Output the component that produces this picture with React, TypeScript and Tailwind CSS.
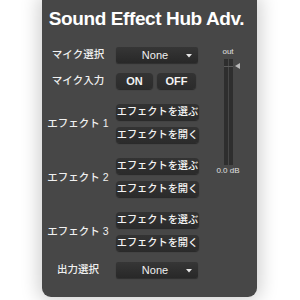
import React from 'react';

const jp = { fontFamily: '"Liberation Sans", "Noto Sans CJK JP", sans-serif' };

function Arrow() {
  return (
    <svg width="6" height="4" viewBox="0 0 6 4" className="absolute right-[6px] top-[7px]">
      <path d="M0 0 L6 0 L3 3.5 Z" fill="#e6e6e6" />
    </svg>
  );
}

function SelectBox({ value }: { value: string }) {
  return (
    <div className="relative w-[82px] h-[16px] rounded-[2px] bg-gradient-to-b from-[#363636] to-[#282828] shadow-[0_1px_1px_rgba(0,0,0,0.35)] flex items-center justify-center text-[11px] text-[#f0f0f0] pr-[4px]">
      <span>{value}</span>
      <Arrow />
    </div>
  );
}

function Btn({ label, w, bold }: { label: string; w: string; bold?: boolean }) {
  return (
    <div
      className={`${w} h-[16px] rounded-[4px] bg-gradient-to-b from-[#333333] to-[#2b2b2b] shadow-[0_1px_1px_rgba(0,0,0,0.45)] flex items-center justify-center text-[#f4f4f4] whitespace-nowrap ${
        bold ? 'text-[11px] font-bold' : 'text-[10.2px] font-medium'
      }`}
    >
      {label}
    </div>
  );
}

function Row({ label, children, className }: { label: string; children: React.ReactNode; className?: string }) {
  return (
    <div className={`flex items-center ${className ?? ''}`}>
      <div className="w-[72px] text-center text-[10.5px] font-medium text-[#f0f0f0] whitespace-nowrap">{label}</div>
      <div className="ml-[2px] flex flex-col gap-[7px]">{children}</div>
    </div>
  );
}

function EffectRow({ n, className }: { n: number; className?: string }) {
  return (
    <Row label={`エフェクト ${n}`} className={className}>
      <Btn label="エフェクトを選ぶ" w="w-[83px]" />
      <Btn label="エフェクトを開く" w="w-[83px]" />
    </Row>
  );
}

export default function App() {
  return (
    <div className="w-[300px] h-[300px] bg-white overflow-hidden" style={jp}>
      <div className="ml-[42px] w-[215px] h-[297px] bg-[#474747] rounded-b-[9px] shadow-[0_0_18px_4px_rgba(0,0,0,0.18)]">
        <div className="pt-[9px] pr-[6px] h-[28px] text-center text-[19px] leading-[19px] font-bold text-white tracking-[-0.4px] whitespace-nowrap">
          Sound Effect Hub Adv.
        </div>

        <div className="mt-[19px] flex items-start">
          <div className="w-[158px] flex flex-col">
            <Row label="マイク選択">
              <SelectBox value="None" />
            </Row>
            <Row label="マイク入力" className="mt-[10px]">
              <div className="flex gap-[4px]">
                <Btn label="ON" w="w-[37px]" bold />
                <Btn label="OFF" w="w-[39px]" bold />
              </div>
            </Row>
            <EffectRow n={1} className="mt-[15px]" />
            <EffectRow n={2} className="mt-[15px]" />
            <EffectRow n={3} className="mt-[15px]" />
            <Row label="出力選択" className="mt-[11px]">
              <SelectBox value="None" />
            </Row>
          </div>

          <div className="ml-[16px] w-[24px] flex flex-col items-center">
            <div className="text-[8px] leading-[10px] text-[#e0e0e0]">out</div>
            <div className="relative mt-[2px] h-[106px] w-[9px] flex gap-[1px]">
              <div className="w-[4px] h-full bg-[#2e2e2e]" />
              <div className="w-[4px] h-full bg-[#2e2e2e]" />
              <div className="absolute left-0 top-[7px] w-[9px] h-px bg-[#5a5a5a]" />
              <svg width="6" height="6" viewBox="0 0 6 6" className="absolute left-[11px] top-[4px]">
                <path d="M0 3 L5 0 L5 6 Z" fill="#b8b8b8" />
              </svg>
            </div>
            <div className="mt-[1px] text-[8px] leading-[9px] text-[#e0e0e0] whitespace-nowrap">0.0 dB</div>
          </div>
        </div>
      </div>
    </div>
  );
}
